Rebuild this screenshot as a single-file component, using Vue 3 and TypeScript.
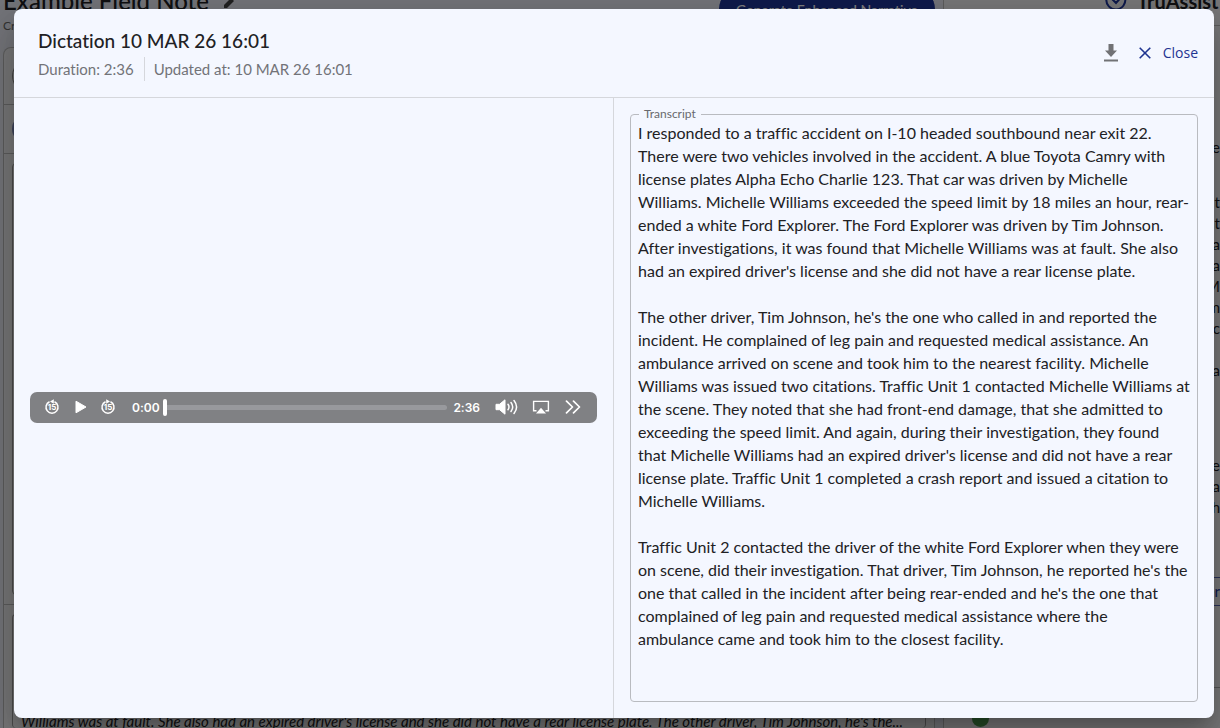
<script setup lang="ts">
import { ref } from 'vue'

const transcript = ref(`I responded to a traffic accident on I-10 headed southbound near exit 22. There were two vehicles involved in the accident. A blue Toyota Camry with license plates Alpha Echo Charlie 123. That car was driven by Michelle Williams. Michelle Williams exceeded the speed limit by 18 miles an hour, rear-ended a white Ford Explorer. The Ford Explorer was driven by Tim Johnson. After investigations, it was found that Michelle Williams was at fault. She also had an expired driver's license and she did not have a rear license plate.

The other driver, Tim Johnson, he's the one who called in and reported the incident. He complained of leg pain and requested medical assistance. An ambulance arrived on scene and took him to the nearest facility. Michelle Williams was issued two citations. Traffic Unit 1 contacted Michelle Williams at the scene. They noted that she had front-end damage, that she admitted to exceeding the speed limit. And again, during their investigation, they found that Michelle Williams had an expired driver's license and did not have a rear license plate. Traffic Unit 1 completed a crash report and issued a citation to Michelle Williams.

Traffic Unit 2 contacted the driver of the white Ford Explorer when they were on scene, did their investigation. That driver, Tim Johnson, he reported he's the one that called in the incident after being rear-ended and he's the one that complained of leg pain and requested medical assistance where the
ambulance came and took him to the closest facility.`)

const position = ref(0)
const assistLines: string[][] = [
  ['le'],
  ['t', 'nt', 'oa', 'a', 'M', 'm', 'Sc', '', 'a'],
  ['e', 'a', 'h'],
]
</script>

<template>
  <div class="app">
    <div class="page">
      <main class="note">
        <div class="note-head">
          <h1>Example Field Note <svg width="12" height="12" viewBox="0 0 12 12"><path d="M1 11V8l7-7 3 3-7 7z" fill="#444" /></svg></h1>
          <button class="generate" type="button">Generate Enhanced Narrative</button>
        </div>
        <p class="created">Created</p>
        <section class="card">
          <div class="tool tall"><span class="ring"></span></div>
          <div class="tool"><span class="ring small"></span></div>
          <div class="block"><div class="inner"></div></div>
          <div class="block last">
            <div class="inner excerpt"><p>Williams was at fault. She also had an expired driver's license and she did not have a rear license plate. The other driver, Tim Johnson, he's the...</p></div>
          </div>
        </section>
      </main>
      <aside class="assist">
        <div class="brand">
          <svg width="22" height="22" viewBox="0 0 22 22" fill="none" stroke="#1f3699" stroke-width="2"><path d="M20 8.500A9.500 9.500 0 1 1 14 2M6 9l5 5 9-10" /></svg>
          <strong>TruAssist</strong>
        </div>
        <div class="messages">
          <p v-for="(group, g) in assistLines" :key="g"><span v-for="(line, i) in group" :key="i">{{ line }}</span></p>
          <button class="insert" type="button">er</button>
        </div>
        <div class="status"><i></i></div>
      </aside>
    </div>

    <div class="backdrop">
      <section class="dialog" role="dialog" aria-modal="true" aria-labelledby="dialog-title">
        <header class="head">
          <div>
            <h2 id="dialog-title">Dictation 10 MAR 26 16:01</h2>
            <div class="meta"><span>Duration: 2:36</span><span>Updated at: 10 MAR 26 16:01</span></div>
          </div>
          <div class="actions">
            <button type="button" aria-label="Download">
              <svg width="16" height="18" viewBox="0 0 16 18"><path d="M5.500 0h5v6.500H14L8 13 2 6.500h3.500z" fill="#717275" /><path d="M1 15.500h14v2H1z" fill="#717275" /></svg>
            </button>
            <button type="button" class="close">
              <svg width="12" height="12" viewBox="0 0 12 12" stroke="#1f3491" stroke-width="1.600"><path d="M.7.7l10.600 10.600M11.300.7L.7 11.300" /></svg>
              Close
            </button>
          </div>
        </header>
        <div class="body">
          <div class="audio">
            <div class="player">
              <button type="button" aria-label="Back 15 seconds">
                <svg width="16" height="16" viewBox="0 0 16 16"><path d="M5.500 2.700a6 6 0 1 0 5 0" fill="none" stroke="#fff" stroke-width="1.500" /><path d="M9.800.2v4.600L6 2.500z" fill="#fff" /><text x="8" y="11.200" text-anchor="middle">15</text></svg>
              </button>
              <button type="button" class="play" aria-label="Play">
                <svg width="12" height="14" viewBox="0 0 12 14"><path d="M1 1.200L11 7 1 12.800z" fill="#fff" stroke="#fff" stroke-linejoin="round" /></svg>
              </button>
              <button type="button" aria-label="Forward 15 seconds">
                <svg width="16" height="16" viewBox="0 0 16 16"><path d="M5.500 2.700a6 6 0 1 0 5 0" fill="none" stroke="#fff" stroke-width="1.500" /><path d="M6.200.2v4.600L10 2.500z" fill="#fff" /><text x="8" y="11.200" text-anchor="middle">15</text></svg>
              </button>
              <time class="elapsed">0:00</time>
              <input v-model="position" type="range" min="0" max="156" aria-label="Position" />
              <time>2:36</time>
              <button type="button" class="volume" aria-label="Mute">
                <svg width="24" height="16" viewBox="0 0 24 16"><path d="M1 5.300h3.500L10 .8v14.400l-5.500-4.500H1z" fill="#fff" stroke="#fff" stroke-linejoin="round" /><path d="M13 5.300q2 2.700 0 5.400M16 3.500q3.400 4.500 0 9M19 1.500q5.200 6.500 0 13" fill="none" stroke="#fff" stroke-width="1.500" stroke-linecap="round" /></svg>
              </button>
              <button type="button" class="airplay" aria-label="AirPlay">
                <svg width="18" height="14" viewBox="0 0 18 14"><path d="M4.500 10.800H1.600V1.400h14.800v9.400h-2.900" fill="none" stroke="#fff" stroke-width="1.400" /><path d="M9 7.800l5 5.700H4z" fill="#fff" /></svg>
              </button>
              <button type="button" class="more" aria-label="More controls">
                <svg width="16" height="14" viewBox="0 0 16 14" fill="none" stroke="#fff" stroke-width="1.700" stroke-linecap="round" stroke-linejoin="round"><path d="M1.500 1.200L7.500 7l-6 5.800M8.500 1.200L14.500 7l-6 5.800" /></svg>
              </button>
            </div>
          </div>
          <div class="transcript">
            <div class="field">
              <label for="transcript">Transcript</label>
              <textarea id="transcript" v-model="transcript" readonly spellcheck="false"></textarea>
            </div>
          </div>
        </div>
      </section>
    </div>
  </div>
</template>

<style>
html, body, #app { height: 100%; }
body { margin: 0; overflow: hidden; }
</style>

<style scoped>
* { box-sizing: border-box; }
.app { height: 100%; position: relative; overflow: hidden; font-family: Lato, "Liberation Sans", sans-serif; font-variant-ligatures: none; color: #212124; }
h1, h2, p { margin: 0; }
button { border: 0; padding: 0; background: none; font: inherit; color: inherit; display: flex; align-items: center; cursor: pointer; }
svg { display: block; flex: none; }

.page { height: 100%; display: flex; background: #e9ebf5; overflow: hidden; }
.note { flex: 1; min-width: 0; padding: 0 8px 0 3px; display: flex; flex-direction: column; }
.note-head { display: flex; justify-content: space-between; height: 19px; }
h1 { display: flex; gap: 14px; font-size: 24px; line-height: 28px; font-weight: 500; margin-top: -18px; align-items: center; }
h1 svg { margin-top: 4px; }
.generate { width: 216px; height: 40px; margin-top: -11px; border-radius: 20px; background: #1f3699; color: #fff; justify-content: center; font-size: 14px; font-weight: 500; }
.created { font-size: 12px; line-height: 14px; color: #666; height: 28px; }
.card { flex: 1; background: #f0f1f2; border: 1px solid #bbb; border-bottom: 0; border-radius: 8px 0 0 0; display: flex; flex-direction: column; }
.tool { height: 49px; padding: 10px 8px; border-bottom: 1px solid #bbb; }
.tool.tall { height: 57px; }
.ring { display: block; width: 36px; height: 36px; border: 1px solid #888; border-radius: 18px; }
.ring.small { width: 28px; height: 28px; border: 2px solid #7c88b8; }
.block { height: 451px; padding: 9px 8px; border-bottom: 1px solid #bbb; }
.block.last { flex: 1; padding-bottom: 0; border: 0; }
.inner { height: 100%; border: 1px solid #999; border-radius: 4px; }
.excerpt { display: flex; align-items: flex-end; padding: 0 8px; font-size: 15px; line-height: 18px; font-style: italic; white-space: nowrap; border-bottom: 0; }
.excerpt p { margin-bottom: -2px; }
.assist { flex: 0 0 277px; border-left: 1px solid #bbb; background: #f0f1f3; display: flex; flex-direction: column; }
.brand { height: 26px; flex: none; border-bottom: 1px solid #bbb; display: flex; justify-content: flex-end; gap: 10px; font-size: 20px; }
.brand svg { margin-top: -11px; }
.brand strong { margin-top: -11px; width: 83px; white-space: nowrap; }
.messages { flex: 1; margin-left: 8px; border-left: 1px solid #aaa; border-bottom: 1px solid #aaa; padding-top: 111px; text-align: right; font-size: 15px; line-height: 21px; }
.messages span { display: block; height: 21px; }
.messages p { margin-bottom: 34px; }
.messages p:nth-child(2) { margin-bottom: 74px; }
.messages p:nth-child(3) { margin-bottom: 59px; }
.insert { width: 100%; height: 29px; border: 1px solid #5565ae; border-right: 0; color: #1f3699; justify-content: flex-end; }
.status { height: 40px; padding: 22px 28px 0; }
.status i { display: block; width: 17px; height: 17px; border-radius: 9px; background: #4c9a50; }

.backdrop { position: absolute; inset: 0; padding: 9px 6px 10px 14px; background: rgba(0, 0, 0, 0.5); display: flex; }
.dialog { flex: 1; min-width: 0; display: flex; flex-direction: column; background: #f4f7ff; border-radius: 8px; box-shadow: 0 11px 15px -7px rgba(0, 0, 0, 0.2), 0 24px 38px 3px rgba(0, 0, 0, 0.14), 0 9px 46px 8px rgba(0, 0, 0, 0.12); }
.head { display: flex; align-items: center; justify-content: space-between; height: 89px; padding: 0 16px 0 24px; border-bottom: 1px solid #d5d7dc; }
h2 { font-size: 19px; line-height: 32px; font-weight: 500; }
.meta { display: flex; align-items: center; color: #727378; font-size: 15px; line-height: 24px; }
.meta span + span { margin-left: 10px; padding-left: 9px; border-left: 1px solid #d5d7dc; }
.actions { display: flex; align-items: center; gap: 20px; }
.close { gap: 12px; color: #1f3491; font-family: "Open Sans", "Noto Sans", sans-serif; font-size: 14px; line-height: 20px; font-weight: 500; }
.body { flex: 1; min-height: 0; display: flex; }
.audio { flex: 0 0 50%; min-width: 0; padding: 16px 16px 18px; border-right: 1px solid #d5d7dc; display: flex; align-items: center; }
.player { flex: 1; min-width: 0; height: 31px; border-radius: 7px; background: #808184; display: flex; align-items: center; padding: 0 16px 0 14px; color: #fff; font-family: Inter, "Liberation Sans", sans-serif; font-size: 12px; font-weight: 600; }
.player text { fill: #fff; font-size: 8px; font-weight: 700; }
.play { margin: 0 13px 0 15px; }
.elapsed { margin-left: 16px; }
.player input { flex: 1; min-width: 0; height: 17px; margin: 0 6px 0 3px; appearance: none; background: transparent; }
.player input::-webkit-slider-runnable-track { height: 5px; border-radius: 3px; background: #98999d; }
.player input::-webkit-slider-thumb { appearance: none; width: 4px; height: 17px; margin-top: -6px; border-radius: 2px; background: #fff; }
.volume { margin-left: 15px; }
.airplay { margin: 0 15px 0 13px; }
.transcript { flex: 0 0 50%; min-width: 0; padding: 16px; display: flex; }
.field { position: relative; flex: 1; display: flex; min-width: 0; }
.field label { position: absolute; left: 9px; top: -8px; padding: 0 5px; background: #f4f7ff; color: #68696e; font-size: 12px; line-height: 16px; }
textarea { flex: 1; min-width: 0; border: 1px solid #b9bbc0; border-radius: 4px; padding: 6px 6px 6px 7px; margin: 0; background: none; resize: none; outline: none; font: inherit; font-variant-ligatures: none; font-size: 16px; line-height: 23px; color: inherit; overflow: hidden; }
</style>
